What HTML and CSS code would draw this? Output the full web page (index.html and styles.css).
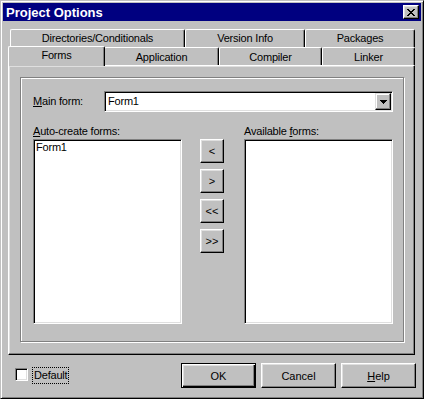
FILE: index.html
```html
<!DOCTYPE html>
<html lang="en">
<head>
  <meta charset="UTF-8">
  <title>Project Options</title>
  <link rel="stylesheet" href="styles.css">
</head>
<body>

  <div class="window">

    <div class="titlebar">
      <span class="title">Project Options</span>
      <button class="close">
        <svg width="8" height="7" viewBox="0 0 8 7" shape-rendering="crispEdges">
          <path d="M0 0h2v1H0zM6 0h2v1H6zM1 1h2v1H1zM5 1h2v1H5zM2 2h4v1H2zM3 3h2v1H3zM2 4h4v1H2zM1 5h2v1H1zM5 5h2v1H5zM0 6h2v1H0zM6 6h2v1H6z" fill="#000"/>
        </svg>
      </button>
    </div>

    <div class="tabs">
      <div class="tabrow back">
        <div class="tab t-dir">Directories/Conditionals</div>
        <div class="tab t-ver">Version Info</div>
        <div class="tab t-pkg">Packages</div>
      </div>
      <div class="tabrow front">
        <div class="tab t-forms active">Forms</div>
        <div class="tab t-app">Application</div>
        <div class="tab t-comp">Compiler</div>
        <div class="tab t-link">Linker</div>
      </div>
    </div>

    <div class="panel">
      <div class="group">

        <div class="mainrow">
          <label><u>M</u>ain form:</label>
          <div class="combo">
            <span class="value">Form1</span>
            <span class="drop">
              <svg width="7" height="4" viewBox="0 0 7 4" shape-rendering="crispEdges">
                <path d="M0 0h7v1H0zM1 1h5v1H1zM2 2h3v1H2zM3 3h1v1H3z" fill="#000"/>
              </svg>
            </span>
          </div>
        </div>

        <div class="lists">
          <div class="col">
            <label><u>A</u>uto-create forms:</label>
            <div class="listbox">
              <div class="item">Form1</div>
            </div>
          </div>

          <div class="movebtns">
            <button class="btn move">&lt;</button>
            <button class="btn move">&gt;</button>
            <button class="btn move">&lt;&lt;</button>
            <button class="btn move">&gt;&gt;</button>
          </div>

          <div class="col">
            <label>Available <u>f</u>orms:</label>
            <div class="listbox"></div>
          </div>
        </div>

      </div>
    </div>

    <div class="footer">
      <label class="check">
        <span class="box"></span>
        <span class="focus">Default</span>
      </label>
      <div class="buttons">
        <button class="btn push default">OK</button>
        <button class="btn push">Cancel</button>
        <button class="btn push"><u>H</u>elp</button>
      </div>
    </div>

  </div>

</body>
</html>
```
FILE: styles.css
```css
body {
  margin: 0;
  padding: 0;
  background-color: #c0c0c0;
  font-family: "Liberation Sans", Arial, sans-serif;
  font-size: 11px;
  letter-spacing: -0.2px;
  color: #000;
}

.window {
  box-sizing: border-box;
  width: 424px;
  height: 399px;
  padding: 2px;
  background-color: #c0c0c0;
  border: 1px solid;
  border-color: #c0c0c0 #000 #000 #c0c0c0;
  box-shadow: inset 1px 1px #fff, inset -1px -1px #808080;
}

.titlebar {
  display: flex;
  align-items: center;
  justify-content: space-between;
  height: 18px;
  padding: 0 2px 0 3px;
  background-color: #000080;
}

.title {
  color: white;
  font-weight: bold;
  font-size: 13px;
  letter-spacing: 0;
}

.close {
  box-sizing: border-box;
  width: 16px;
  height: 14px;
  padding: 0;
  display: flex;
  align-items: center;
  justify-content: center;
  background-color: #c0c0c0;
  border: 1px solid;
  border-color: #fff #000 #000 #fff;
  box-shadow: inset -1px -1px #808080, inset 1px 1px #dfdfdf;
}

/* tab strip */

.tabs {
  margin: 8px 6px 0 5px;
}

.tabrow {
  display: flex;
  height: 18px;
  padding-left: 2px;
}

.tab {
  box-sizing: border-box;
  height: 18px;
  padding-top: 2px;
  line-height: 13px;
  text-align: center;
  background-color: #c0c0c0;
  border: 1px solid;
  border-color: #fff #000 transparent #fff;
  border-bottom: 0;
  border-radius: 2px 2px 0 0;
  box-shadow: inset -1px 0 #808080;
}

.front .tab {
  padding-top: 3px;
}

.front .tab.active {
  position: relative;
  z-index: 1;
  height: 20px;
  margin: -1px -1px 0 -2px;
  padding-top: 2px;
}

.t-dir { width: 175px; }
.t-ver { width: 120px; }
.t-pkg { width: 110px; }
.t-forms { width: 97px; }
.t-app { width: 115px; }
.t-comp { width: 103px; }
.t-link { width: 93px; }

.panel {
  box-sizing: border-box;
  height: 290px;
  margin: 0 6px 0 5px;
  padding: 11px 0 0 11px;
  border: 1px solid;
  border-color: #fff #000 #000 #fff;
  box-shadow: inset -1px -1px #808080, inset 1px 1px #dfdfdf;
}

.group {
  box-sizing: border-box;
  width: 384px;
  height: 265px;
  padding: 13px 10px 0 12px;
  border: 1px solid #808080;
  box-shadow: 1px 1px #fff, inset 1px 1px #fff;
}

.mainrow {
  display: flex;
  height: 21px;
}

.mainrow label {
  width: 71px;
  line-height: 21px;
}

.combo,
.listbox {
  box-sizing: border-box;
  padding: 1px;
  background-color: white;
  border: 1px solid;
  border-color: #808080 #fff #fff #808080;
  box-shadow: inset 1px 1px #000, inset -1px -1px #dfdfdf;
}

.combo {
  flex: 1;
  display: flex;
}

.combo .value {
  flex: 1;
  line-height: 17px;
  padding-left: 2px;
}

.drop {
  box-sizing: border-box;
  width: 16px;
  height: 17px;
  display: flex;
  align-items: center;
  justify-content: center;
  background-color: #c0c0c0;
  border: 1px solid;
  border-color: #dfdfdf #000 #000 #dfdfdf;
  box-shadow: inset -1px -1px #808080, inset 1px 1px #fff;
}

.lists {
  display: flex;
  margin-top: 13px;
}

.col {
  width: 149px;
}

.col label {
  display: block;
  height: 14px;
  line-height: 13px;
}

.listbox {
  height: 185px;
}

.item {
  line-height: 13px;
  padding-left: 1px;
}

.movebtns {
  display: flex;
  flex-direction: column;
  gap: 6px;
  margin: 14px 20px 0 18px;
}

.btn {
  box-sizing: border-box;
  padding: 0;
  font: inherit;
  color: #000;
  background-color: #c0c0c0;
  border: 1px solid;
  border-color: #fff #000 #000 #fff;
  box-shadow: inset -1px -1px #808080, inset 1px 1px #dfdfdf;
}

.move {
  width: 24px;
  height: 24px;
}

/* bottom row */

.footer {
  display: flex;
  align-items: center;
  height: 25px;
  margin-top: 8px;
  padding: 0 5px 0 12px;
}

.check {
  display: flex;
  align-items: center;
}

.box {
  box-sizing: border-box;
  width: 13px;
  height: 13px;
  margin-bottom: 2px;
  background-color: white;
  border: 1px solid;
  border-color: #808080 #fff #fff #808080;
  box-shadow: inset 1px 1px #000, inset -1px -1px #dfdfdf;
}

.focus {
  margin-left: 4px;
  padding: 0 1px;
  line-height: 15px;
  border: 1px dotted #000;
}

.buttons {
  display: flex;
  gap: 5px;
  margin-left: auto;
}

.push {
  width: 75px;
  height: 25px;
}

.default {
  border-color: #000;
  box-shadow: inset 1px 1px #fff, inset -1px -1px #000, inset -2px -2px #808080, inset 2px 2px #dfdfdf;
}
```
